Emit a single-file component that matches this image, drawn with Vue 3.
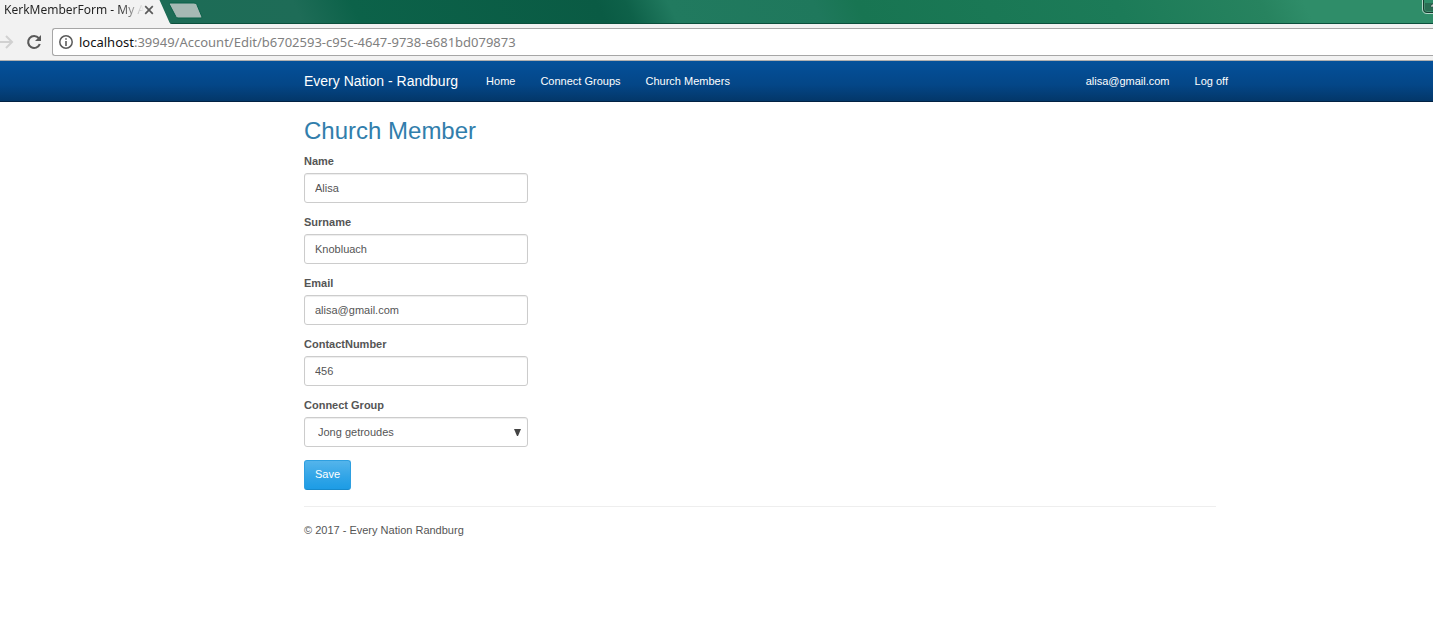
<script setup>
import { ref } from 'vue'

const fields = ref([
  { id: 'name', label: 'Name', type: 'text', value: 'Alisa' },
  { id: 'surname', label: 'Surname', type: 'text', value: 'Knobluach' },
  { id: 'email', label: 'Email', type: 'email', value: 'alisa@gmail.com' },
  { id: 'contact', label: 'ContactNumber', type: 'text', value: '456' }
])
const group = ref('Jong getroudes')
</script>

<template>
  <div class="window">
    <header class="browser">
      <div class="tabs">
        <div class="tab">
          <svg class="tab-shape" width="172" height="24" viewBox="0 0 172 24" aria-hidden="true">
            <path d="M0 0H159.500L169.500 22.500Q170 24 172 24H0Z" fill="#f2f2f2" />
          </svg>
          <span class="tab-title">KerkMemberForm - My A</span>
          <button class="tab-close" type="button" aria-label="Close tab">
            <svg width="10" height="10" viewBox="0 0 10 10"><path d="M1.200 1.200L8.800 8.800M8.800 1.200L1.200 8.800" stroke="#5a5a5a" stroke-width="1.700" /></svg>
          </button>
        </div>
        <button class="new-tab" type="button" aria-label="New tab">
          <svg width="35" height="17" viewBox="0 0 35 17"><path d="M2 1H26Q28 1 28.800 2.500L34 15Q34 16 33 16H10Q8.500 16 7.800 14.500L1.500 2.500Q1 1 2 1Z" fill="#a6b9b4" stroke="#0b6049" stroke-width="1" /></svg>
        </button>
        <svg class="window-button" width="11" height="14" viewBox="0 0 11 14" aria-hidden="true">
          <path d="M.5 0V9Q.5 13.500 5 13.500H11" fill="#448d70" stroke="#b3d7c8" />
          <path d="M1.500 0V9Q1.500 12.500 5 12.500H11" fill="none" stroke="#173c30" />
          <path d="M3 3H11V11H5Q3 11 3 9Z" fill="#296d53" />
          <path d="M9 5H10V4H11V7H9Z" fill="#fff" stroke="#25493e" stroke-width=".6" />
        </svg>
      </div>
      <div class="toolbar">
        <button class="tool forward" type="button" aria-label="Forward">
          <svg width="14" height="16" viewBox="0 0 14 16"><path d="M0 8H12M6 2L12 8L6 14" fill="none" stroke="#d1d1d1" stroke-width="2" /></svg>
        </button>
        <button class="tool" type="button" aria-label="Reload">
          <svg width="16" height="16" viewBox="0 0 16 16"><path d="M12.800 4.200A6 6 0 1 0 13.800 10" fill="none" stroke="#5a5a5a" stroke-width="2.100" /><path d="M15 1V7H9Z" fill="#5a5a5a" /></svg>
        </button>
        <div class="address">
          <svg width="14" height="14" viewBox="0 0 14 14" aria-hidden="true"><circle cx="7" cy="7" r="6.200" fill="none" stroke="#5a5a5a" stroke-width="1.500" /><path d="M6.200 3.200H7.800V4.800H6.200ZM6.200 6H7.800V11H6.200Z" fill="#5a5a5a" /></svg>
          <span class="url"><b>localhost</b>:39949/Account/Edit/b6702593-c95c-4647-9738-e681bd079873</span>
        </div>
      </div>
    </header>

    <nav class="navbar">
      <div class="nav-inner">
        <a class="brand" href="#">Every Nation - Randburg</a>
        <a href="#">Home</a>
        <a href="#">Connect Groups</a>
        <a href="#">Church Members</a>
        <a class="account" href="#">alisa@gmail.com</a>
        <a href="#">Log off</a>
      </div>
    </nav>

    <main class="content">
      <h2>Church Member</h2>
      <form @submit.prevent>
        <div v-for="f in fields" :key="f.id" class="group">
          <label :for="f.id">{{ f.label }}</label>
          <input :id="f.id" v-model="f.value" class="control" :type="f.type" />
        </div>
        <div class="group">
          <label for="connect-group">Connect Group</label>
          <div class="select-wrap">
            <select id="connect-group" v-model="group" class="control">
              <option>Jong getroudes</option>
            </select>
            <svg class="caret" width="7" height="7" viewBox="0 0 7 7" aria-hidden="true"><path d="M0 0H7L4 7H3Z" fill="#444" /></svg>
          </div>
        </div>
        <button class="save" type="submit">Save</button>
      </form>
      <hr />
      <footer>© 2017 - Every Nation Randburg</footer>
    </main>
  </div>
</template>

<style>
body { margin: 0; background: #fff; }
</style>

<style scoped>
* { box-sizing: border-box; }
.window {
  overflow: hidden;
  font-family: "Liberation Sans", Arial, sans-serif;
  font-size: 11px;
  line-height: 16px;
  color: #555;
}
button { font: inherit; padding: 0; border: 0; background: none; }
svg { display: block; }

.browser { font-family: "Noto Sans", "Open Sans", sans-serif; background: #f2f2f2; }
.tabs {
  display: flex;
  height: 24px;
  box-shadow: inset 0 -1px #0b4f3c;
  background: linear-gradient(65deg, #1b6c55 0%, #1e6c57 21%, #0c6249 25%, #0a5b44 42%, #0e6149 44%, #217a5f 47%, #1f785c 57%, #187552 60%, #1c7b58 78%, #27835f 88%, #2f8d69 91%, #2f8d69 100%);
}
.tab { position: relative; display: flex; align-items: center; width: 168px; height: 24px; padding: 0 0 4px 4px; }
.tab-shape { position: absolute; left: 0; top: 0; }
.tab-title {
  position: relative;
  flex: none;
  width: 140px;
  white-space: nowrap;
  font-size: 12px;
  color: transparent;
  background: linear-gradient(90deg, #222 82%, rgba(34, 34, 34, 0) 100%);
  background-clip: text;
}
.tab-close { position: relative; }
.new-tab { align-self: flex-start; margin-top: 2px; }
.window-button { margin-left: auto; }
.toolbar {
  display: flex;
  align-items: center;
  height: 37px;
  border-bottom: 1px solid #b0b0b0;
}
.forward { margin-right: 12px; }
.address {
  display: flex;
  flex: 1;
  align-items: center;
  gap: 6px;
  height: 28px;
  margin-left: 10px;
  padding-left: 6px;
  border: 1px solid #a6a6a6;
  border-right: 0;
  border-radius: 3px 0 0 3px;
  background: #fff;
}
.url { font-size: 13px; white-space: nowrap; color: #808080; }
.url b { font-weight: 400; color: #111; }

.navbar {
  height: 41px;
  padding-left: 304px;
  border-bottom: 1px solid #022243;
  background: linear-gradient(#04519b, #044687 60%, #033769);
}
.nav-inner { display: flex; align-items: center; gap: 25px; max-width: 924px; height: 40px; }
.nav-inner a { color: #fff; text-decoration: none; white-space: nowrap; }
.nav-inner .brand { margin-right: 3px; font-size: 14px; }
.nav-inner .account { margin-left: auto; }

.content { margin-left: 304px; max-width: 912px; }
h2 { margin: 0; padding: 16px 0 8px; font-size: 24px; line-height: 26px; font-weight: 400; color: #317eac; }
.group { margin-bottom: 10px; width: 224px; }
label { display: block; height: 21px; font-weight: 700; line-height: 18px; }
.control {
  display: block;
  width: 100%;
  height: 30px;
  padding: 0 10px;
  border: 1px solid #ccc;
  border-radius: 3px;
  background: #fff;
  box-shadow: inset 0 1px 1px rgba(0, 0, 0, 0.075);
  color: #555;
  font: inherit;
}
.select-wrap { position: relative; }
select.control { appearance: none; padding-left: 13px; }
.caret { position: absolute; right: 7px; top: 12px; pointer-events: none; }
.save {
  display: block;
  height: 30px;
  margin-top: 13px;
  padding: 0 10px 2px;
  border: 1px solid #2e9fe0;
  border-bottom-color: #178acc;
  border-radius: 3px;
  background: linear-gradient(#54b4eb, #2fa4e7 60%, #1d9ce5);
  color: #fff;
}
hr { margin: 16px 0 15px; border: 0; border-top: 1px solid #eee; }
</style>
